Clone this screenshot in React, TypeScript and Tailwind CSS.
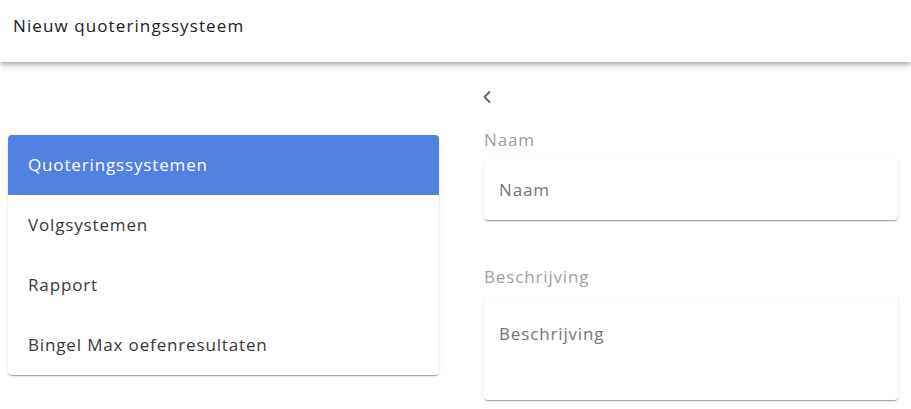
import { ChevronLeft } from "lucide-react";

const items = [
  { label: "Quoteringssystemen", active: true },
  { label: "Volgsystemen", active: false },
  { label: "Rapport", active: false },
  { label: "Bingel Max oefenresultaten", active: false },
];

const cardShadow =
  "shadow-[0_2px_1px_-1px_rgba(0,0,0,0.2),0_1px_1px_0_rgba(0,0,0,0.14),0_1px_3px_0_rgba(0,0,0,0.12)]";

export default function App() {
  return (
    <div className="min-h-screen bg-white font-['Open_Sans','Lato',sans-serif] tracking-[0.85px]">
      {/* Header */}
      <header className="relative z-10 h-[62px] bg-white flex items-center px-[13px] shadow-[0_2px_4px_-1px_rgba(0,0,0,0.2),0_4px_5px_0_rgba(0,0,0,0.14),0_1px_10px_0_rgba(0,0,0,0.12)]">
        <h1 className="text-[17px] text-[#212121] tracking-[1.1px] -mt-[10px]">Nieuw quoteringssysteem</h1>
      </header>

      <div className="flex">
        {/* Left menu */}
        <div className="w-[455px] pl-2 pr-4 pt-[73px]">
          <nav className={`rounded overflow-hidden bg-white ${cardShadow}`}>
            {items.map(({ label, active }) => (
              <div
                key={label}
                className={`h-[60px] flex items-center px-5 text-[17px] ${
                  active ? "bg-[#5181e1] text-white" : "text-[#383838]"
                }`}
              >
                {label}
              </div>
            ))}
          </nav>
        </div>

        {/* Right form */}
        <div className="flex-1 pl-[29px] pr-[13px] pt-[24px]">
          <button className="h-[22px] flex items-center text-[#616161] -ml-[7px]">
            <ChevronLeft size={20} strokeWidth={2.2} />
          </button>

          <label className="block mt-[20px] text-[17px] text-[#9e9e9e] leading-6">Naam</label>
          <div className={`mt-[8px] h-[60px] rounded bg-white flex items-center px-[15px] ${cardShadow}`}>
            <span className="text-[17px] text-[#757575]">Naam</span>
          </div>

          <label className="block mt-[45px] text-[17px] text-[#9e9e9e] leading-6">Beschrijving</label>
          <div className={`mt-[8px] h-[103px] rounded bg-white px-[15px] pt-[25px] ${cardShadow}`}>
            <span className="text-[17px] text-[#757575] leading-6">Beschrijving</span>
          </div>
        </div>
      </div>
    </div>
  );
}
